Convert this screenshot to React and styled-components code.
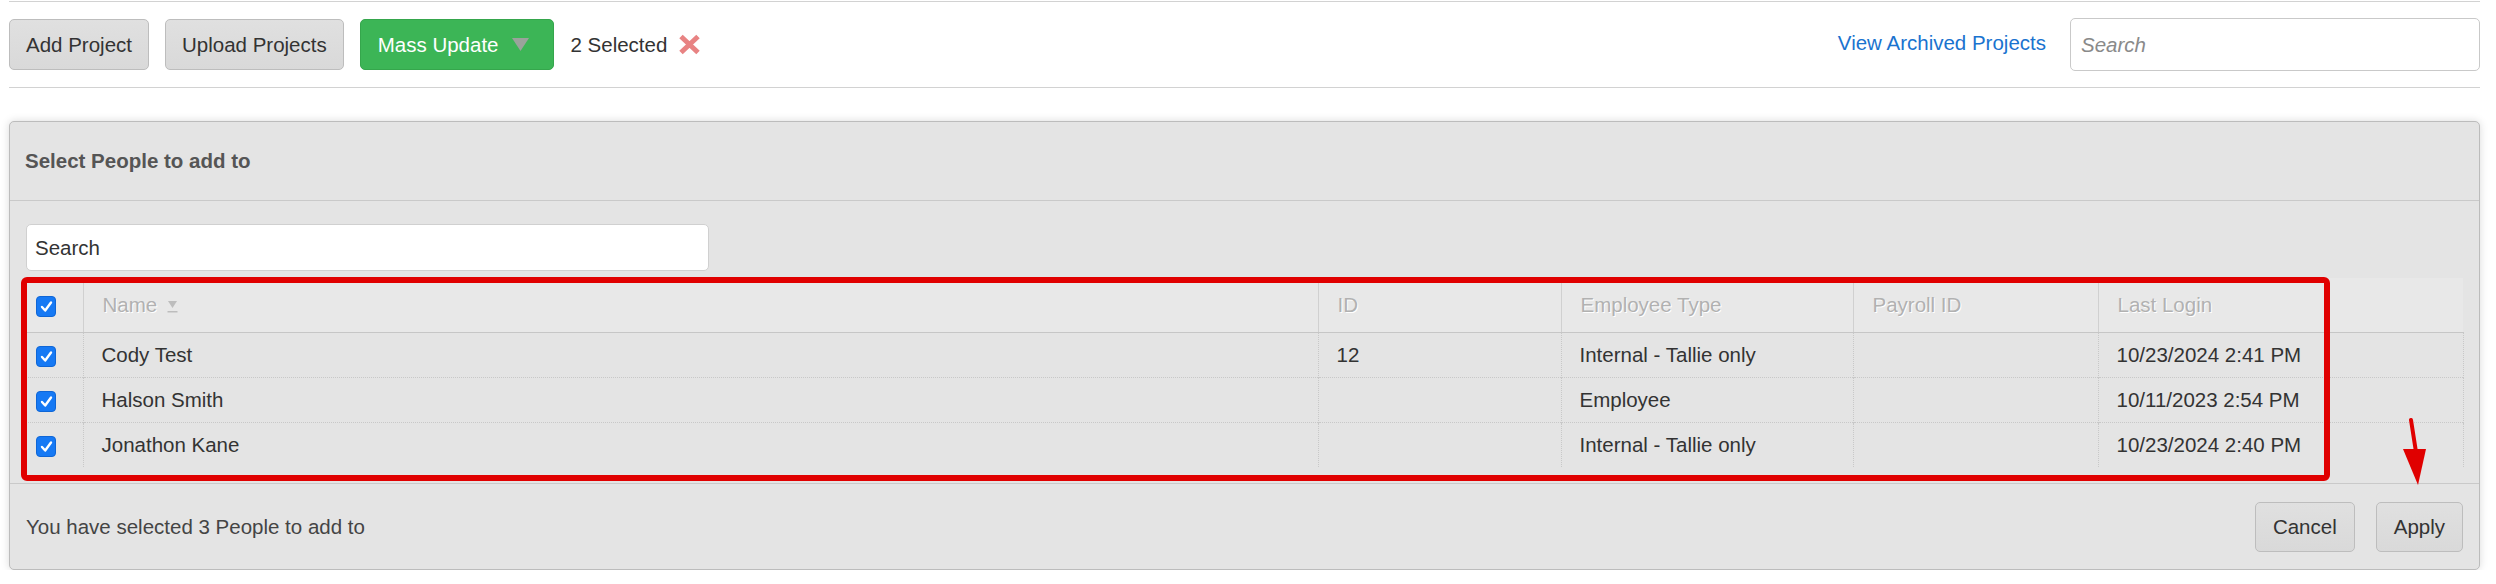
import React from 'react';
import styled, { createGlobalStyle } from 'styled-components';

const GlobalStyle = createGlobalStyle`
  body {
    margin: 0;
    background: #ffffff;
    font-family: 'Liberation Sans', Arial, Helvetica, sans-serif;
    color: #333;
  }
  * { box-sizing: border-box; }
`;

const Page = styled.div`
  padding: 1px 16px 0 9px;
`;

// Top toolbar
const Toolbar = styled.div`
  display: flex;
  align-items: center;
  gap: 16px;
  padding: 16px 0;
  border-top: 1px solid #d2d2d2;
  border-bottom: 1px solid #d2d2d2;
`;

const Button = styled.button`
  display: inline-flex;
  align-items: center;
  height: ${(p) => (p.$small ? '50px' : '51px')};
  padding: 0 ${(p) => (p.$small ? '17px' : '16px')};
  font-family: inherit;
  font-size: 20.5px;
  color: #333;
  background: linear-gradient(#e0e0e0, #d9d9d9);
  border: 1px solid #bdbdbd;
  border-radius: 5px;
  cursor: pointer;
`;

const GreenButton = styled(Button)`
  gap: 14px;
  padding: 0 24px 0 17px;
  color: #fff;
  background: #3cb556;
  border-color: #35a64c;
`;

const SelectedText = styled.span`
  display: inline-flex;
  align-items: center;
  gap: 11px;
  font-size: 20.5px;
  color: #333;
`;

const RightGroup = styled.div`
  margin-left: auto;
  display: flex;
  align-items: center;
  gap: 24px;
`;

const ArchiveLink = styled.a`
  color: #1a73cf;
  font-size: 20.5px;
  text-decoration: none;
  margin-top: -3px;
`;

const TopSearch = styled.input`
  width: 410px;
  height: 53px;
  padding: 0 10px;
  font-family: inherit;
  font-size: 20.5px;
  border: 1px solid #c9c9c9;
  border-radius: 5px;
  background: #fff;
  &::placeholder {
    color: #8a8a8a;
    font-style: italic;
  }
`;

// Panel
const Panel = styled.div`
  position: relative;
  margin-top: 33px;
  background: #e4e4e4;
  border: 1px solid #bcbcbc;
  border-radius: 5px;
  box-shadow: 0 0 8px rgba(0, 0, 0, 0.15);
`;

const PanelHeader = styled.div`
  display: flex;
  align-items: center;
  height: 79px;
  padding: 0 15px;
  border-bottom: 1px solid #c9c9c9;
  font-size: 20.5px;
  font-weight: bold;
  color: #555;
`;

const PanelBody = styled.div`
  padding: 23px 16px 16px;
  border-bottom: 1px solid #c9c9c9;
`;

const PeopleSearch = styled.input`
  display: block;
  width: 683px;
  height: 47px;
  margin-bottom: 7px;
  padding: 0 8px;
  font-family: inherit;
  font-size: 20.5px;
  color: #333;
  background: #fff;
  border: 1px solid #d0d0d0;
  border-radius: 5px;
`;

const TableWrap = styled.div`
  position: relative;
`;

const Table = styled.table`
  width: 100%;
  border-collapse: collapse;
  table-layout: fixed;
  font-size: 20.5px;
`;

const HeadCell = styled.th`
  height: 54px;
  padding: 0 0 0 ${(p) => (p.$check ? '10px' : '19px')};
  text-align: left;
  font-weight: normal;
  color: #b1b1b1;
  text-shadow: 1px 1px 0 #fff;
  background: #e8e8e8;
  border-bottom: 1px solid #c6c6c6;
  border-left: ${(p) => (p.$check ? 'none' : '1px solid #d0d0d0')};
`;

const Cell = styled.td`
  height: 45px;
  padding: 0 0 0 ${(p) => (p.$check ? '10px' : '18px')};
  color: #333;
  border-top: 1px dotted #c8c8c8;
  border-left: ${(p) => (p.$check ? 'none' : '1px dotted #c8c8c8')};
  border-right: ${(p) => (p.$last ? '1px dotted #c8c8c8' : 'none')};
  tr:first-child > & {
    border-top: none;
  }
`;

const Check = styled.span`
  display: inline-flex;
  align-items: center;
  justify-content: center;
  width: 20px;
  height: 21px;
  vertical-align: middle;
  background: #1679f4;
  border: 1px solid #0f66d6;
  border-radius: 4px;
`;

const SortMark = styled.span`
  display: inline-block;
  margin-left: 10px;
  vertical-align: middle;
  line-height: 0;
`;

const Highlight = styled.div`
  position: absolute;
  left: -5px;
  top: -1px;
  width: 2309px;
  height: 204px;
  border: 6px solid #e00000;
  border-radius: 6px;
  pointer-events: none;
`;

const PanelFooter = styled.div`
  display: flex;
  align-items: center;
  justify-content: space-between;
  height: 85px;
  padding: 0 16px;
  font-size: 20.5px;
  color: #444;
`;

const FooterActions = styled.div`
  display: flex;
  gap: 21px;
`;

const Arrow = styled.svg`
  position: absolute;
  left: 2388px;
  top: 296px;
  pointer-events: none;
`;

const CheckBox = () => (
  <Check>
    <svg width="13" height="13" viewBox="0 0 13 13">
      <path d="M2 7 L5.2 10.5 L11 2.5" fill="none" stroke="#fff" strokeWidth="2.4" strokeLinecap="round" strokeLinejoin="round" />
    </svg>
  </Check>
);

const people = [
  { name: 'Cody Test', id: '12', type: 'Internal - Tallie only', payroll: '', login: '10/23/2024 2:41 PM' },
  { name: 'Halson Smith', id: '', type: 'Employee', payroll: '', login: '10/11/2023 2:54 PM' },
  { name: 'Jonathon Kane', id: '', type: 'Internal - Tallie only', payroll: '', login: '10/23/2024 2:40 PM' },
];

const App = () => {
  return (
    <Page>
      <GlobalStyle />
      <Toolbar>
        <Button>Add Project</Button>
        <Button>Upload Projects</Button>
        <GreenButton>
          Mass Update
          <svg width="17" height="13" viewBox="0 0 17 13">
            <path d="M0 0 H17 L8.5 13 Z" fill="#9aa39b" />
          </svg>
        </GreenButton>
        <SelectedText>
          2 Selected
          <svg width="23" height="21" viewBox="0 0 23 21">
            <path d="M3 2.5 L20 18.5 M20 2.5 L3 18.5" stroke="#e88383" strokeWidth="5" />
          </svg>
        </SelectedText>
        <RightGroup>
          <ArchiveLink href="#">View Archived Projects</ArchiveLink>
          <TopSearch placeholder="Search" />
        </RightGroup>
      </Toolbar>

      <Panel>
        <PanelHeader>Select People to add to</PanelHeader>
        <PanelBody>
          <PeopleSearch defaultValue="Search" />
          <TableWrap>
            <Table>
              <colgroup>
                <col style={{ width: 57 }} />
                <col style={{ width: 1235 }} />
                <col style={{ width: 243 }} />
                <col style={{ width: 292 }} />
                <col style={{ width: 245 }} />
                <col style={{ width: 365 }} />
              </colgroup>
              <thead>
                <tr>
                  <HeadCell $check><CheckBox /></HeadCell>
                  <HeadCell>
                    Name
                    <SortMark>
                      <svg width="11" height="13" viewBox="0 0 11 13">
                        <path d="M1 1 H10 L5.5 8 Z" fill="#bdbdbd" />
                        <rect x="0.5" y="11" width="10" height="1.5" fill="#bdbdbd" />
                      </svg>
                    </SortMark>
                  </HeadCell>
                  <HeadCell>ID</HeadCell>
                  <HeadCell>Employee Type</HeadCell>
                  <HeadCell>Payroll ID</HeadCell>
                  <HeadCell>Last Login</HeadCell>
                </tr>
              </thead>
              <tbody>
                {people.map((p) => (
                  <tr key={p.name}>
                    <Cell $check><CheckBox /></Cell>
                    <Cell>{p.name}</Cell>
                    <Cell>{p.id}</Cell>
                    <Cell>{p.type}</Cell>
                    <Cell>{p.payroll}</Cell>
                    <Cell $last>{p.login}</Cell>
                  </tr>
                ))}
              </tbody>
            </Table>
            <Highlight />
          </TableWrap>
        </PanelBody>
        <PanelFooter>
          <span>You have selected 3 People to add to</span>
          <FooterActions>
            <Button $small>Cancel</Button>
            <Button $small>Apply</Button>
          </FooterActions>
        </PanelFooter>
        <Arrow width="34" height="70" viewBox="0 0 34 70">
          <path d="M13 2 L18 34" stroke="#e00000" strokeWidth="4" strokeLinecap="round" />
          <path d="M5 31 L28 31 L20 67 Z" fill="#e00000" />
        </Arrow>
      </Panel>
    </Page>
  );
};

export default App;
